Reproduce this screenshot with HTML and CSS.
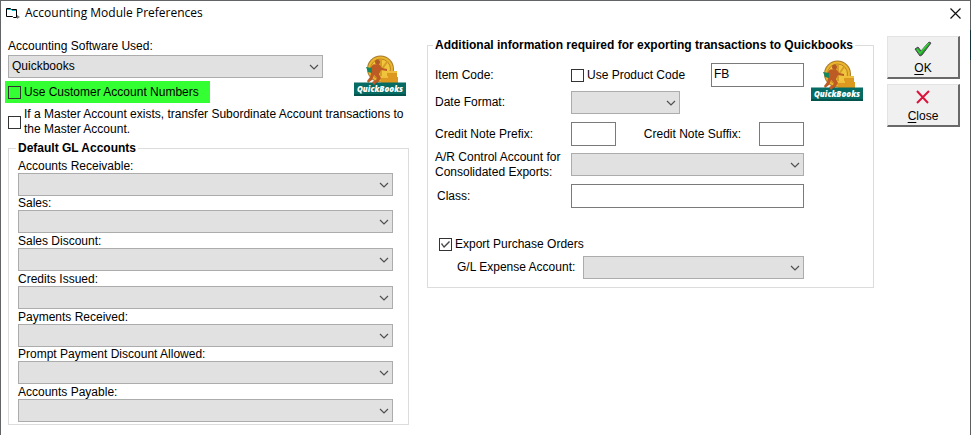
FILE: index.html
```html
<!DOCTYPE html>
<html lang="en">
<head>
<meta charset="utf-8">
<title>Accounting Module Preferences</title>
<link rel="stylesheet" href="styles.css">
</head>
<body>
<svg class="defs" aria-hidden="true">
  <symbol id="chevron" viewBox="0 0 10 6"><path d="M1 1l4 4 4-4" fill="none" stroke="#505050" stroke-width="1.2"/></symbol>
  <symbol id="quickbooks" viewBox="0 0 52 41">
    <circle cx="26.500" cy="14" r="13.500" fill="#a87a2b"/>
    <circle cx="26.500" cy="14" r="12.500" fill="#eab52c"/>
    <circle cx="26.500" cy="14" r="10" fill="#f0c43c" stroke="#bd8423" stroke-width="1"/>
    <path d="M27 4v17M33 7l-8 11" stroke="#d59c28" stroke-width="2"/>
    <path d="M27 28v-6h6v-5h10v5h1v6z" fill="#dc981f"/>
    <path d="M33 16h10v2H33zM27 21h7v2h-7z" fill="#efbe3d"/>
    <circle cx="23.500" cy="7" r="2.500" fill="#b45b25"/>
    <path d="M19 9.500l6-.500 3 4 5 1v2l-6-1-2 4 2 4-4 6h-3l3-6-3-3-2 5-4 3-1-2 3-4 2-7-4 1z" fill="#bd5b24"/>
    <path d="M12 12l6 1v5l-4-1z" fill="#16865f"/>
    <path fill="#066b62" d="M0 27.500h52V41H0z"/>
    <path fill="#04544e" d="M0 39h52v2H0z"/>
    <path d="M18 27l4-2 1 2-3 3z" fill="#bd5b24"/>
    <text x="26" y="37" text-anchor="middle" class="logo-text">QuickBooks</text>
  </symbol>
</svg>
<main class="window">
  <header class="titlebar">
    <svg class="app-icon" width="14" height="12" viewBox="0 0 14 12" aria-hidden="true">
      <path d="M.500 1.500h4l1 1h5v8h-3l-1-1h-6z" fill="#fff" stroke="#000" stroke-width="1"/>
      <path d="M1 2.500h4l1 1h4" fill="none" stroke="#17b4c0" stroke-width="1"/>
      <path d="M11 8l3 2-3 2z" fill="#777"/>
    </svg>
    <h1 class="title">Accounting Module Preferences</h1>
    <button class="dismiss" type="button" aria-label="Close window">
      <svg width="11" height="11" viewBox="0 0 11 11"><path d="M.500.500l10 10M10.500.500l-10 10" stroke="#111" stroke-width="1.200"/></svg>
    </button>
  </header>
  <form class="content">
    <section class="general">
      <div class="software">
        <div class="field">
          <label for="software">Accounting Software Used:</label>
          <span class="select"><select id="software"><option>Quickbooks</option></select><svg class="chevron"><use href="#chevron"/></svg></span>
        </div>
        <svg class="logo"><use href="#quickbooks"/></svg>
        <label class="check highlight"><input type="checkbox">Use Customer Account Numbers</label>
      </div>
      <label class="check master"><input type="checkbox"><span>If a Master Account exists, transfer Subordinate Account transactions to the Master Account.</span></label>
      <fieldset class="accounts">
        <legend>Default GL Accounts</legend>
        <div class="account"><label for="receivable">Accounts Receivable:</label><span class="select"><select id="receivable"></select><svg class="chevron"><use href="#chevron"/></svg></span></div>
        <div class="account"><label for="sales">Sales:</label><span class="select"><select id="sales"></select><svg class="chevron"><use href="#chevron"/></svg></span></div>
        <div class="account"><label for="discount">Sales Discount:</label><span class="select"><select id="discount"></select><svg class="chevron"><use href="#chevron"/></svg></span></div>
        <div class="account"><label for="credits">Credits Issued:</label><span class="select"><select id="credits"></select><svg class="chevron"><use href="#chevron"/></svg></span></div>
        <div class="account"><label for="payments">Payments Received:</label><span class="select"><select id="payments"></select><svg class="chevron"><use href="#chevron"/></svg></span></div>
        <div class="account"><label for="prompt">Prompt Payment Discount Allowed:</label><span class="select"><select id="prompt"></select><svg class="chevron"><use href="#chevron"/></svg></span></div>
        <div class="account"><label for="payable">Accounts Payable:</label><span class="select"><select id="payable"></select><svg class="chevron"><use href="#chevron"/></svg></span></div>
      </fieldset>
    </section>
    <fieldset class="export">
      <legend>Additional information required for exporting transactions to Quickbooks</legend>
      <div class="rows">
        <div class="row">
          <label class="name" for="item">Item Code:</label>
          <div class="controls">
            <label class="check"><input type="checkbox">Use Product Code</label>
            <input class="text code" id="item" type="text" value="FB">
          </div>
        </div>
        <div class="row">
          <label class="name" for="date">Date Format:</label>
          <div class="controls"><span class="select date"><select id="date"></select><svg class="chevron"><use href="#chevron"/></svg></span></div>
        </div>
        <div class="row">
          <label class="name" for="prefix">Credit Note Prefix:</label>
          <div class="controls">
            <input class="text affix" id="prefix" type="text">
            <label class="suffix" for="suffix">Credit Note Suffix:</label>
            <input class="text affix" id="suffix" type="text">
          </div>
        </div>
        <div class="row">
          <label class="name" for="control">A/R Control Account for Consolidated Exports:</label>
          <div class="controls"><span class="select"><select id="control"></select><svg class="chevron"><use href="#chevron"/></svg></span></div>
        </div>
        <div class="row">
          <label class="name class-name" for="class">Class:</label>
          <div class="controls"><input class="text" id="class" type="text"></div>
        </div>
        <div class="row orders"><label class="check"><input type="checkbox" checked>Export Purchase Orders</label></div>
        <div class="row expense">
          <label class="name" for="expense">G/L Expense Account:</label>
          <div class="controls"><span class="select"><select id="expense"></select><svg class="chevron"><use href="#chevron"/></svg></span></div>
        </div>
      </div>
      <svg class="logo"><use href="#quickbooks"/></svg>
    </fieldset>
    <div class="actions">
      <button class="action" type="button">
        <svg width="18" height="16" viewBox="0 0 18 16"><path d="M1 8l3-2 3 4 8-9 2 1-9 12-2 1z" fill="#259b2b" stroke="#59405f" stroke-width="1"/><path d="M3 8l3 4 9-10" fill="none" stroke="#35cf38" stroke-width="1.500"/></svg>
        <span><u>O</u>K</span>
      </button>
      <button class="action" type="button">
        <svg width="18" height="16" viewBox="0 0 18 16"><path d="M3 2l11 12M15 2L3 14" fill="none" stroke="#dc143c" stroke-width="2"/></svg>
        <span><u>C</u>lose</span>
      </button>
    </div>
  </form>
</main>
</body>
</html>
```
FILE: styles.css
```css
* { box-sizing: border-box; }

body {
  margin: 0;
  background: linear-gradient(#5c5f61 30px, #15333d 30px 60px, #5c5f61 60px);
  font: 12px/15px "Liberation Sans", Arial, sans-serif;
  color: #000;
}

input, select, button { font: inherit; color: inherit; margin: 0; }

.defs { display: none; }

.window {
  display: flex;
  flex-direction: column;
  min-height: 100vh;
  margin-right: 1px;
  border: solid #636466;
  border-width: 1px 0 0 1px;
  background: #fff;
}

.titlebar {
  display: flex;
  align-items: center;
  height: 24px;
  padding: 0 9px 0 5px;
  gap: 5px;
}

.title {
  flex: 1;
  margin: 0;
  font: 12px/16px "Open Sans", "Noto Sans", sans-serif;
}

.dismiss { display: flex; padding: 0; border: 0; background: none; }

.content {
  flex: 1;
  display: grid;
  grid-template-columns: 401fr 478fr 73px;
  padding: 11px 10px 10px 7px;
}

.general { display: flex; flex-direction: column; padding-top: 2px; }

.software {
  display: grid;
  grid-template-columns: 1fr 52px;
  column-gap: 31px;
  row-gap: 3px;
  padding-right: 3px;
}

.field { display: flex; flex-direction: column; }
.field label { line-height: 17px; }

.logo { width: 52px; height: 41px; }
.software .logo { grid-row: 1 / 3; grid-column: 2; margin-top: 17px; }
.logo-text { font: italic 800 8px "Open Sans", "Noto Sans", sans-serif; fill: #fff; }

.select { position: relative; display: flex; width: 100%; height: 23px; }

.select select {
  appearance: none;
  width: 100%;
  padding: 0 20px 0 3px;
  border: 1px solid #acacac;
  border-radius: 0;
  background: #e1e1e1;
}

.chevron {
  position: absolute;
  right: 4px;
  top: 9px;
  width: 10px;
  height: 6px;
  pointer-events: none;
}

.check { display: flex; align-items: center; gap: 3px; }

.check input {
  appearance: none;
  display: grid;
  place-items: center;
  flex: none;
  width: 13px;
  height: 13px;
  border: 1px solid #333;
  background: #fff;
}

.check input:checked::after {
  content: "";
  width: 11px;
  height: 11px;
  background: #444;
  clip-path: polygon(1px 5px, 2px 4px, 4px 7px, 9px 2px, 10px 3px, 4px 9px);
}

.highlight {
  justify-self: start;
  height: 22px;
  margin-left: -3px;
  padding: 0 11px 0 3px;
  background: #33ff33;
}

.highlight input { background: transparent; }
.master { margin-top: 4px; }

fieldset {
  min-width: 0;
  margin: 0;
  border: 1px solid #dcdcdc;
}

legend { margin-left: -2px; padding: 0 2px; font-weight: bold; white-space: nowrap; }

.accounts {
  flex: 1;
  display: grid;
  grid-auto-rows: 1fr;
  margin-top: 4px;
  padding: 2px 15px 2px 9px;
}

.account { display: flex; flex-direction: column; justify-content: flex-end; }
.account label { line-height: 14px; }

.export {
  align-self: start;
  display: grid;
  grid-template-columns: 1fr 52px;
  column-gap: 7px;
  margin: 2px 13px 0 18px;
  padding: 10px 10px 8px 7px;
}

.export .logo { margin-top: -3px; }

.rows {
  display: grid;
  grid-template-rows: 28px 31px 31px 31px 54px 18px 23px;
  align-items: start;
}

.row { display: flex; align-items: center; min-height: 23px; }
.name { flex: none; width: 136px; margin: -4px 0; }
.class-name { padding-left: 2px; }
.controls { flex: 1; min-width: 0; display: flex; align-items: center; }

.text {
  width: 100%;
  height: 24px;
  padding: 0 2px 3px;
  border: 1px solid #7a7a7a;
  border-radius: 0;
  background: #fff;
}

.code { width: 93px; margin-left: auto; }
.affix { width: 45px; }
.suffix { margin-left: auto; padding-right: 18px; }
.date { width: 109px; }
.orders { min-height: 13px; padding-left: 4px; }
.orders .check { height: 13px; }
.expense { padding-left: 22px; }
.expense .name { width: 126px; }

.actions { display: flex; flex-direction: column; gap: 5px; }

.action {
  display: flex;
  flex-direction: column;
  align-items: center;
  gap: 4px;
  height: 43px;
  padding: 4px 0 0;
  border: solid;
  border-width: 1px 2px 2px 1px;
  border-color: #e3e3e3 #696969 #696969 #e3e3e3;
  background: #f0f0f0;
}
.action u { text-underline-offset: 2px; }
```
